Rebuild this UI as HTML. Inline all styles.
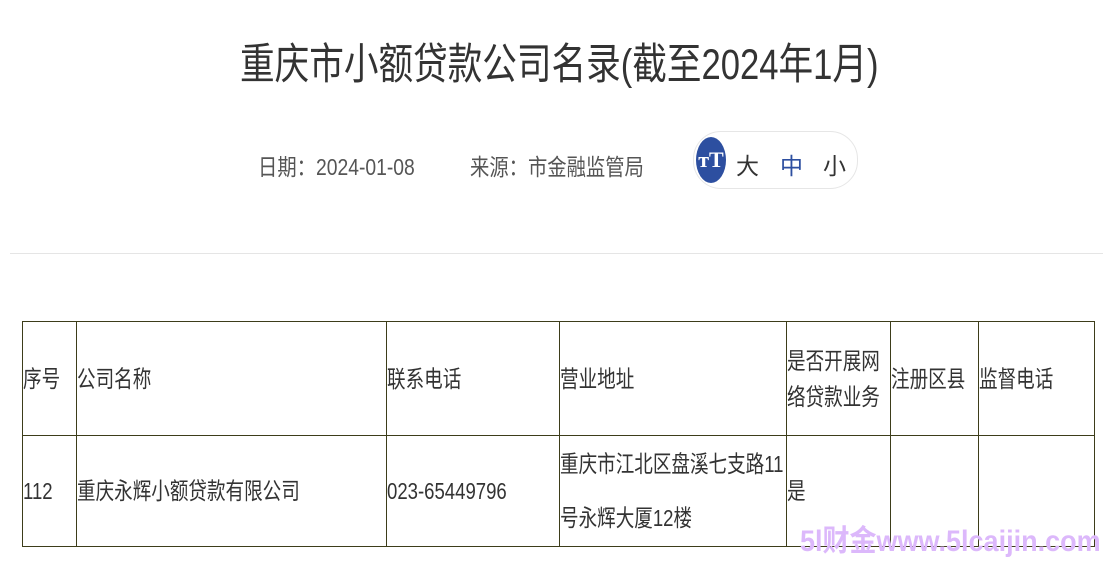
<!DOCTYPE html>
<html><head><meta charset="utf-8"><style>
body{margin:0;width:1118px;height:563px;background:#fff;position:relative;overflow:hidden;font-family:"Liberation Sans","Noto Sans CJK SC",sans-serif;}
.s{display:inline-block;transform:scaleX(0.86);transform-origin:left center;white-space:nowrap}
.t{display:inline-block;transform:scaleX(0.79);transform-origin:left center;white-space:nowrap}
.abs{position:absolute}
table{position:absolute;left:22px;top:321px;width:1072px;border-collapse:collapse;table-layout:fixed}
td{border:1.5px solid #3d3d1a;padding:0;font-size:23.5px;color:#333;vertical-align:middle;line-height:38px;overflow:hidden}
</style></head><body>
<div class="abs" style="left:240px;top:30px;font-size:43px;color:#333;"><span class="s" style="transform:scaleX(0.805)">重庆市小额贷款公司名录(截至2024年1月)</span></div>
<div class="abs" style="left:258px;top:148px;font-size:23px;color:#555;"><span class="s" style="transform:scaleX(0.84)">日期：2024-01-08</span></div>
<div class="abs" style="left:470px;top:148px;font-size:23px;color:#555;"><span class="s" style="transform:scaleX(0.84)">来源：市金融监管局</span></div>
<div class="abs" style="left:693px;top:131px;width:163px;height:56px;border:1px solid #e6e6e6;border-radius:28px;"></div>
<div class="abs" style="left:696px;top:137px;width:30px;height:46px;border-radius:50%;background:#2d4fa0;color:#fff;font-family:'Liberation Serif',serif;font-size:22px;font-weight:bold;text-align:center;line-height:46px;">тT</div>
<div class="abs" style="left:736px;top:147px;font-size:23px;color:#333;">大</div>
<div class="abs" style="left:780px;top:147px;font-size:23px;color:#2d4fa0;">中</div>
<div class="abs" style="left:823px;top:147px;font-size:23px;color:#333;">小</div>
<div class="abs" style="left:10px;top:253px;width:1093px;height:1px;background:#e5e5e5"></div>
<table>
<colgroup><col style="width:54px"><col style="width:310px"><col style="width:173px"><col style="width:227px"><col style="width:104px"><col style="width:88px"><col style="width:116px"></colgroup>
<tr style="height:114px"><td><span class="t">序号</span></td><td><span class="t">公司名称</span></td><td><span class="t">联系电话</span></td><td><span class="t">营业地址</span></td><td style="line-height:36px"><span class="t">是否开展网<br>络贷款业务</span></td><td><span class="t">注册区县</span></td><td><span class="t">监督电话</span></td></tr>
<tr style="height:111px"><td><span class="t">112</span></td><td><span class="t">重庆永辉小额贷款有限公司</span></td><td><span class="t">023-65449796</span></td><td style="line-height:54px"><span class="t">重庆市江北区盘溪七支路11<br>号永辉大厦12楼</span></td><td><span class="t">是</span></td><td></td><td></td></tr>
</table>
<div class="abs" style="left:800px;top:516px;font-size:30px;font-weight:bold;color:#dcb8fb;"><span class="s" style="transform:scaleX(0.9)">5l财金www.5lcaijin.com</span></div>
</body></html>
